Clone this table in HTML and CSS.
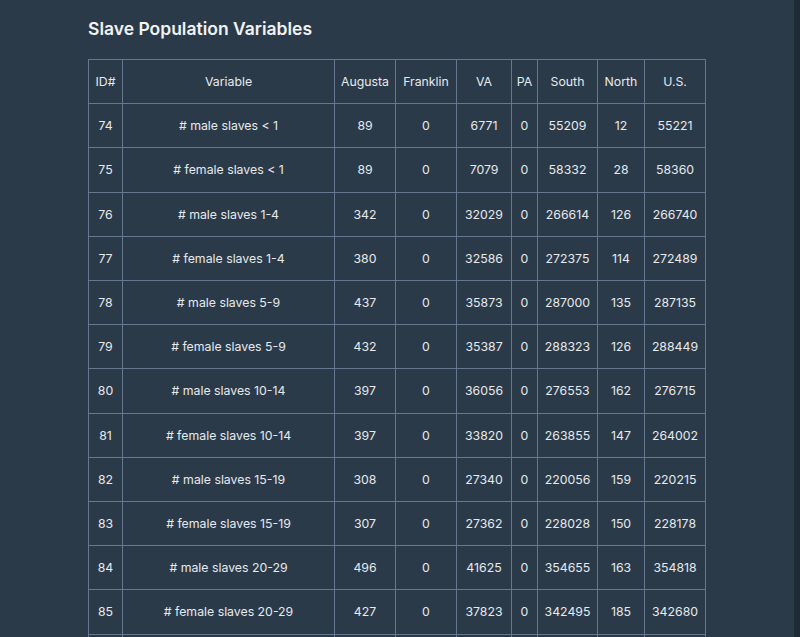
FILE: index.html
```html
<!DOCTYPE html>
<html lang="en">
<head>
<meta charset="utf-8">
<title>Slave Population Variables</title>
<link rel="stylesheet" href="styles.css">
</head>
<body>
<div class="page">
  <main class="content">
    <h2 class="title">Slave Population Variables</h2>
    <table class="data">
      <colgroup>
        <col class="c-id"><col class="c-var"><col class="c-aug"><col class="c-fra"><col class="c-va"><col class="c-pa"><col class="c-south"><col class="c-north"><col class="c-us">
      </colgroup>
      <thead>
        <tr><th>ID#</th><th>Variable</th><th>Augusta</th><th>Franklin</th><th>VA</th><th>PA</th><th>South</th><th>North</th><th>U.S.</th></tr>
      </thead>
      <tbody>
        <tr><td>74</td><td># male slaves &lt; 1</td><td>89</td><td>0</td><td>6771</td><td>0</td><td>55209</td><td>12</td><td>55221</td></tr>
        <tr><td>75</td><td># female slaves &lt; 1</td><td>89</td><td>0</td><td>7079</td><td>0</td><td>58332</td><td>28</td><td>58360</td></tr>
        <tr><td>76</td><td># male slaves 1-4</td><td>342</td><td>0</td><td>32029</td><td>0</td><td>266614</td><td>126</td><td>266740</td></tr>
        <tr><td>77</td><td># female slaves 1-4</td><td>380</td><td>0</td><td>32586</td><td>0</td><td>272375</td><td>114</td><td>272489</td></tr>
        <tr><td>78</td><td># male slaves 5-9</td><td>437</td><td>0</td><td>35873</td><td>0</td><td>287000</td><td>135</td><td>287135</td></tr>
        <tr><td>79</td><td># female slaves 5-9</td><td>432</td><td>0</td><td>35387</td><td>0</td><td>288323</td><td>126</td><td>288449</td></tr>
        <tr><td>80</td><td># male slaves 10-14</td><td>397</td><td>0</td><td>36056</td><td>0</td><td>276553</td><td>162</td><td>276715</td></tr>
        <tr><td>81</td><td># female slaves 10-14</td><td>397</td><td>0</td><td>33820</td><td>0</td><td>263855</td><td>147</td><td>264002</td></tr>
        <tr><td>82</td><td># male slaves 15-19</td><td>308</td><td>0</td><td>27340</td><td>0</td><td>220056</td><td>159</td><td>220215</td></tr>
        <tr><td>83</td><td># female slaves 15-19</td><td>307</td><td>0</td><td>27362</td><td>0</td><td>228028</td><td>150</td><td>228178</td></tr>
        <tr><td>84</td><td># male slaves 20-29</td><td>496</td><td>0</td><td>41625</td><td>0</td><td>354655</td><td>163</td><td>354818</td></tr>
        <tr><td>85</td><td># female slaves 20-29</td><td>427</td><td>0</td><td>37823</td><td>0</td><td>342495</td><td>185</td><td>342680</td></tr>
        <tr class="partial"><td></td><td></td><td></td><td></td><td></td><td></td><td></td><td></td><td></td></tr>
      </tbody>
    </table>
  </main>
  <div class="edge"></div>
</div>
</body>
</html>
```
FILE: styles.css
```css
html, body {
  margin: 0;
  padding: 0;
  height: 100%;
  overflow: hidden;
  background: #2b3a48;
}
.page {
  display: flex;
  height: 100%;
}
.content {
  flex: 1;
  padding: 18px 0 0 88px;
  font-family: Inter, "Noto Sans", sans-serif;
  color: #e6e9ed;
}
.edge {
  width: 6px;
  background: #1f2a35;
}
.title {
  margin: 0 0 19px 0;
  font-size: 17.5px;
  font-weight: 600;
  line-height: 22px;
  color: #f1f3f5;
}
.data {
  border-collapse: collapse;
  table-layout: fixed;
  width: 618px;
  font-size: 12.3px;
}
.data th, .data td {
  border: 1px solid #65788f;
  padding: 12px 3px;
  line-height: 19.2px;
  height: 19.2px;
  text-align: center;
  font-weight: 400;
  white-space: nowrap;
  overflow: hidden;
}
.c-id { width: 34px; }
.c-var { width: 212px; }
.c-aug { width: 61px; }
.c-fra { width: 61px; }
.c-va { width: 55px; }
.c-pa { width: 26px; }
.c-south { width: 60px; }
.c-north { width: 47px; }
.c-us { width: 61px; }
```
